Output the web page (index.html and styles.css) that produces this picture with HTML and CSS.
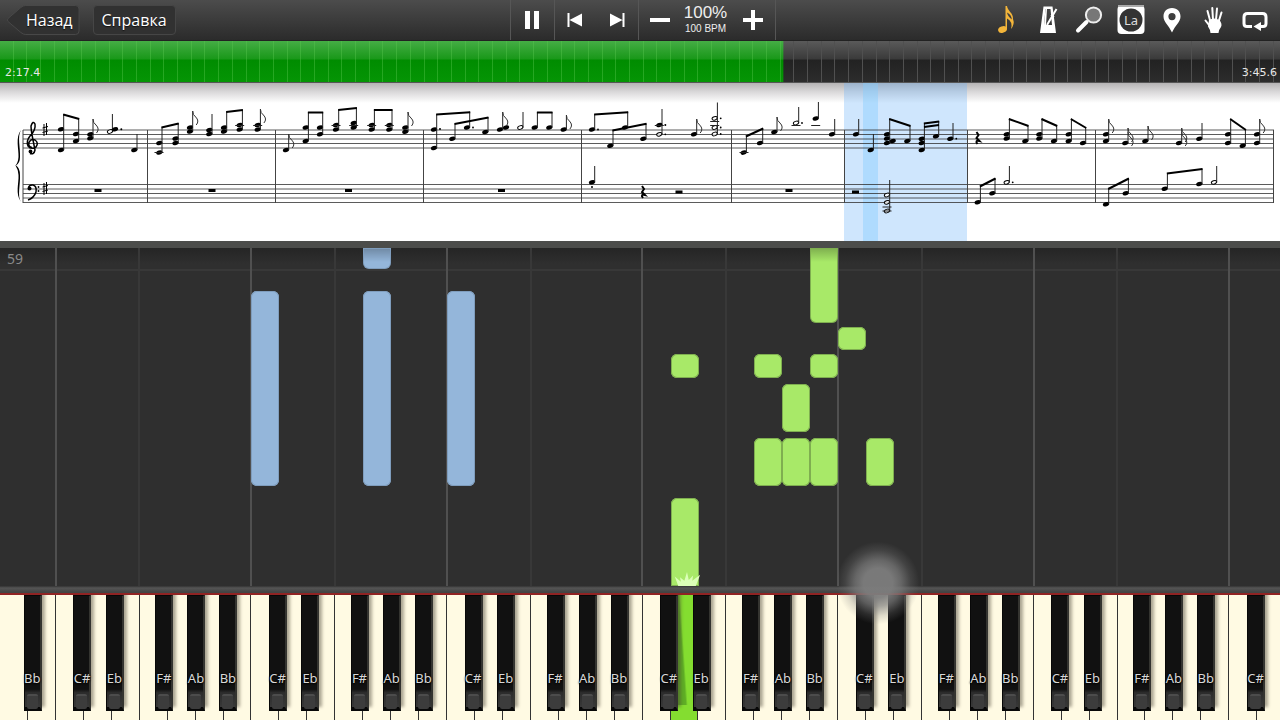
FILE: index.html
```html
<!DOCTYPE html>
<html lang="ru">
<head>
<meta charset="utf-8">
<meta name="viewport" content="width=device-width, initial-scale=1">
<title>Piano</title>
<link rel="stylesheet" href="styles.css">
</head>
<body>
<header class="toolbar">
  <nav class="toolbar-left">
    <button class="nav-btn nav-back" type="button">
      <svg class="back-shape" viewBox="0 0 73 30" preserveAspectRatio="none" aria-hidden="true"><path d="M14 2.500Q16 .5 19 .5H69Q72.500 .5 72.500 4V26Q72.500 29.500 69 29.500H19Q16 29.500 14 27.500L1 16.500Q0 15 1 13.500Z"/></svg>
      <span class="nav-text">Назад</span>
    </button>
    <button class="nav-btn nav-help" type="button">Справка</button>
  </nav>
  <div class="transport">
    <button class="tbtn pause" type="button" aria-label="Pause"><svg width="16" height="18" viewBox="0 0 16 18"><path d="M1 0h5v18H1zM10 0h5v18h-5z"/></svg></button>
    <div class="skip">
      <button class="tbtn" type="button" aria-label="Previous"><svg width="16" height="14" viewBox="0 0 16 14"><path d="M.5 0H2.500V14H.5zM2.500 7L15 .5V13.500z"/></svg></button>
      <button class="tbtn" type="button" aria-label="Next"><svg width="16" height="14" viewBox="0 0 16 14"><path d="M13.500 0h2V14h-2zM13.500 7L1 .5V13.500z"/></svg></button>
    </div>
    <div class="tempo">
      <button class="tbtn" type="button" aria-label="Slower"><svg width="20" height="20" viewBox="0 0 20 20"><path d="M0 8h20v4H0z"/></svg></button>
      <div class="tempo-value"><span class="percent">100%</span><span class="bpm">100 BPM</span></div>
      <button class="tbtn" type="button" aria-label="Faster"><svg width="20" height="20" viewBox="0 0 20 20"><path d="M0 8h8V0h4v8h8v4h-8v8H8v-8H0z"/></svg></button>
    </div>
  </div>
  <div class="tools">
    <button class="tool" type="button" aria-label="Notes"><svg width="28" height="30" viewBox="0 0 28 30"><g class="gold"><ellipse cx="10.500" cy="24.500" rx="4.500" ry="3.200" transform="rotate(-20 10.500 24.500)"/><path d="M13.500 1H15C15.500 6 21.500 8 21 14Q23 19 19 24Q21 16.500 15 13.500V24.500H13.500zM15 7.500Q15.500 11 19.800 14.500Q19.500 9.500 15 7.500z"/></g></svg></button>
    <button class="tool" type="button" aria-label="Metronome"><svg width="28" height="30" viewBox="0 0 28 30"><path fill-rule="evenodd" d="M9.500 1.500H18.500L22 28H6zM11.500 4L10 20H18L16.500 4z"/><path class="line" d="M13 20L22.500 4M17 10L20 12"/><path d="M11.500 4h1.500l-1 16h-2z"/></svg></button>
    <button class="tool" type="button" aria-label="Zoom"><svg width="28" height="30" viewBox="0 0 28 30"><path class="handle" d="M3 25.500L11.500 17"/><circle class="lens" cx="18.500" cy="10" r="7.600"/></svg></button>
    <button class="tool" type="button" aria-label="Labels"><svg width="28" height="30" viewBox="0 0 28 30"><rect x=".5" y=".5" width="27" height="28.500" rx="4"/><path class="pale" d="M1 0H27V2H1z"/><circle class="disc" cx="14" cy="15" r="11.500"/><text class="la" x="14" y="20" text-anchor="middle">La</text></svg></button>
    <button class="tool" type="button" aria-label="Bookmark"><svg width="28" height="30" viewBox="0 0 28 30"><path fill-rule="evenodd" d="M14 3C8.500 3 5.500 7 5.500 11.500C5.500 17 10.500 20 14 27.500C17.500 20 22.500 17 22.500 11.500C22.500 7 19.500 3 14 3zM14 8a3.600 3.600 0 1 1 0 7.200a3.600 3.600 0 1 1 0-7.200z"/></svg></button>
    <button class="tool" type="button" aria-label="Hands"><svg width="28" height="30" viewBox="0 0 28 30"><path class="fingers" d="M10.500 17L7.500 6M13 15L12.300 3M16 15L17 3.500M18.500 17L21.500 7.500M10.500 22L5.500 15.500"/><path d="M9 15Q14 12 19.500 15Q22.500 19 21 22Q18.500 25 18.500 28H10.500Q10.500 25 8 21.500Z"/></svg></button>
    <button class="tool" type="button" aria-label="Loop"><svg width="28" height="30" viewBox="0 0 28 30"><path class="loop" d="M11 21.500H6Q3 21.500 3 18.500V12Q3 8.500 6.500 8.500H21.500Q25 8.500 25 12V18.500Q25 21.500 22 21.500H19"/><path d="M12.500 21.500l7.500-4.500v9z"/></svg></button>
  </div>
</header>
<div class="timeline" role="progressbar" aria-valuemin="0" aria-valuemax="100" aria-valuenow="61" aria-label="Position">
  <div class="timeline-fill"></div>
  <div class="timeline-text"><span>2:17.4</span><span>3:45.6</span></div>
</div>
<section class="score">
  <svg class="sheet" id="sheet" viewBox="0 83 1280 158" role="img" aria-label="Sheet music">
    <rect class="bar-now" x="844" y="83" width="123" height="158"/>
    <rect class="beat-now" x="863" y="83" width="15" height="158"/>
    <g id="staves"></g>
    <path class="brace" d="M21 130C15 137 19 150 18.500 157Q18 163 15.500 165.500Q18 169 18.500 175C19 183 15 194 21 202C17 196 20.500 184 20 175Q20 168 16 165.500Q20 163 20 157C20.500 147 17 137 21 130Z"/>
    <path class="clef" d="M32 147.500Q28 147 29 142.500Q31 138.500 35 140Q39 143 36 147Q31 150 28 146Q26 141 30 136Q36 130 35 124Q33 120 31 126Q31 130 33 140L35 150Q34 155 30 153.500"/>
    <circle cx="30.500" cy="151.500" r="1.900"/>
    <path class="clef" d="M28.500 188Q29 184.500 33 185Q37 186 36 192Q34 198 28 200"/>
    <circle cx="29.500" cy="188.500" r="2"/><circle cx="38.500" cy="187" r=".9"/><circle cx="38.500" cy="191" r=".9"/>
    <path class="sharp" d="M44 124V136M46.500 123V135M42.500 128L48 126.500M42.500 132.500L48 131M44 183V195M46.500 182V194M42.500 187L48 185.500M42.500 191.500L48 190"/>
    <g id="notation"></g>
  </svg>
</section>
<main class="roll" id="roll">
  <span class="bar-number">59</span>
</main>
<div class="rail"></div>
<section class="piano" id="piano" aria-label="Keyboard"></section>
<script src="app.js"></script>
</body>
</html>
```
FILE: styles.css
```css
* { box-sizing: border-box; }

body {
  margin: 0;
  min-height: 100vh;
  display: flex;
  flex-direction: column;
  overflow-x: hidden;
  background: #2f2f2f;
  font-family: "Noto Sans", "Open Sans", sans-serif;
  color: #fff;
}

button {
  margin: 0;
  padding: 0;
  border: 0;
  background: none;
  color: inherit;
  font: inherit;
  cursor: pointer;
}

/* Toolbar */
.toolbar {
  display: grid;
  grid-template-columns: 1fr 266px 1fr;
  height: 40px;
  padding-left: 5px;
  background: linear-gradient(#4c4c4c, #2b2b2b);
}
.toolbar-left {
  display: flex;
  align-items: center;
  gap: 13px;
  padding-left: 2px;
}
.nav-btn {
  height: 30px;
  font-family: "Open Sans", sans-serif;
  font-size: 16px;
  font-weight: 500;
  line-height: 28px;
  text-shadow: 0 1px 1px #111;
}
.nav-back {
  position: relative;
  padding: 0 7px 0 19px;
}
.back-shape {
  position: absolute;
  inset: 0;
  width: 100%;
  height: 100%;
  stroke: #484848;
}
.nav-text { position: relative; }
.nav-help {
  padding: 0 8px;
  background: #313131;
  border: 1px solid #464646;
  border-radius: 4px;
}

.transport {
  display: grid;
  grid-template-columns: 43px 85px 1fr;
  border-left: 1px solid #565656;
  border-right: 1px solid #565656;
}
.tbtn {
  display: flex;
  align-items: center;
  justify-content: center;
}
.toolbar svg { fill: #fff; }
.skip {
  display: grid;
  grid-template-columns: 1fr 1fr;
  border-left: 1px solid #565656;
  border-right: 1px solid #565656;
}
.tempo {
  display: grid;
  grid-template-columns: 42px 50px 1fr;
}
.tempo-value {
  display: flex;
  flex-direction: column;
  align-items: center;
  gap: 1px;
  padding-top: 4px;
  font-family: "Liberation Sans", sans-serif;
  color: #eee;
}
.percent { font-size: 17px; line-height: 18px; }
.bpm { font-size: 10px; line-height: 12px; white-space: nowrap; }

.tools {
  display: flex;
  justify-content: flex-end;
  padding-right: 4px;
}
.tool {
  display: flex;
  align-items: center;
  justify-content: center;
  flex: 0 1 auto;
  width: 3.240vw;
}
.toolbar .gold { fill: #f3b53a; }
.toolbar .back-shape { fill: #313131; }
.line { stroke: #fff; stroke-width: 2; fill: none; }
.handle { stroke: #fff; stroke-width: 4; stroke-linecap: round; }
.lens { fill: #777; stroke: #eee; stroke-width: 2; }
.pale { fill: #aaa; }
.disc { fill: #333; }
.la { font-size: 13px; fill: #ddd; }
.fingers { fill: none; stroke: #fff; stroke-width: 2; stroke-linecap: round; }
.loop { fill: none; stroke: #fff; stroke-width: 3; }

/* Song position */
.timeline {
  position: relative;
  height: 43px;
  border-top: 1px solid #222;
  border-bottom: 1px solid #555;
  background:
    repeating-linear-gradient(90deg, transparent 0 calc(1.07% - 1px), #505050 calc(1.07% - 1px) 1.07%),
    linear-gradient(#5a5a5a 0, #3a3a3a 18px, #222 19px, #2c2c2c 41px);
}
.timeline-fill {
  position: absolute;
  inset: 0;
  background:
    repeating-linear-gradient(90deg, transparent 0 calc(1.07% - 1px), rgba(90, 200, 80, .4) calc(1.07% - 1px) 1.07%),
    linear-gradient(#45ad45 0, #199819 18px, #008c00 19px, #059505 41px);
  clip-path: inset(0 38.8% 0 0);
}
.timeline-text {
  position: relative;
  display: flex;
  justify-content: space-between;
  padding: 25px 3px 0 5px;
  font-family: "DejaVu Sans", sans-serif;
  font-size: 11px;
  line-height: 14px;
  color: #e8e8e8;
}

/* Sheet music */
.score {
  background: linear-gradient(#b5b3b4 0, #dad9da 9px, #fff 20px);
}
.sheet { display: block; width: 100%; height: auto; }
.bar-now { fill: #6cb4f8; opacity: .33; }
.beat-now { fill: #82ccff; opacity: .42; }
.staff-line { stroke: #333; stroke-width: 1; opacity: .8; }
.bar-line { stroke: #444; stroke-width: 1; }
.stem { stroke: #222; stroke-width: 1; }
.beam { stroke: #000; stroke-width: 2; }
.ledger { stroke: #222; stroke-width: 1; }
.half { fill: #fff; fill-opacity: .8; stroke: #000; stroke-width: 1; }
.flag { fill: none; stroke: #333; stroke-width: 1; }
.clef { fill: none; stroke: #000; stroke-width: 1.500; }
.sharp { stroke: #000; stroke-width: 1; }
.quarter-rest { fill: none; stroke: #000; stroke-width: 2; }

/* Falling notes */
.roll {
  position: relative;
  flex: 1 0 345px;
  background: linear-gradient(#252525, #2f2f2f 16px);
  border-top: 7px solid #4c4d4b;
}
.roll::before {
  content: "";
  position: absolute;
  inset: 21px 0 0;
  border-top: 2px solid #383838;
}
.bar-number {
  position: relative;
  display: block;
  padding-left: 7px;
  font-size: 14px;
  line-height: 22px;
  color: #8a8a8a;
}
.guide {
  position: absolute;
  top: 0;
  bottom: 0;
  width: 2px;
  background: #383838;
}
.guide.octave { background: #505050; }
.note {
  position: absolute;
  width: 2.183%;
  border-radius: 6px;
  background: #a8e968;
  box-shadow: inset 0 0 0 1px #7fae50;
}
.note.left { background: #94b6da; box-shadow: inset 0 0 0 1px #7f9dbd; }
.note.entering {
  border-top-left-radius: 0;
  border-top-right-radius: 0;
  background-image: linear-gradient(rgba(0, 0, 0, .25), transparent 14px);
}
.note.playing { border-bottom-left-radius: 0; border-bottom-right-radius: 0; }
.spark {
  position: absolute;
  left: 52.400%;
  bottom: 0;
  width: 32px;
  height: 14px;
  fill: #dcffb8;
}
.glow {
  position: absolute;
  z-index: 3;
  left: 65.200%;
  bottom: -40px;
  width: 86px;
  height: 86px;
  background: radial-gradient(circle, rgba(125, 125, 125, .95) 0 24%, rgba(125, 125, 125, .7) 38%, rgba(125, 125, 125, .25) 54%, transparent 68%);
  pointer-events: none;
}
.rail {
  height: 9px;
  background: linear-gradient(#333, #555 2px, #444 6px);
  border-bottom: 2px solid #902323;
}

/* Keyboard */
.piano {
  position: relative;
  display: flex;
  height: 125px;
  overflow: hidden;
}
.white {
  flex: 0 0 2.183%;
  background: #fffae3;
  border-right: 1px solid #333;
}
.white.down { background: linear-gradient(86deg, #5fae25 44%, #84dd30 50%) 0 0 / 100% 110px no-repeat #84dd30; }
.black {
  position: absolute;
  top: 0;
  width: 18px;
  height: 116px;
  border: 1px solid #080808;
  border-right: 2px solid #343430;
  border-bottom: 4px solid #080808;
  background: linear-gradient(#111 0 84%, #2c2c2c 87%, #383838);
  box-shadow: 3px -4px 3px rgba(70, 65, 50, .45);
  display: flex;
  flex-direction: column;
  align-items: center;
  padding-top: 74px;
  font-size: 13px;
  line-height: 16px;
  color: #d8d8d8;
  text-shadow: 0 1px 2px #000, 0 0 2px #000;
}
.black::after {
  content: "";
  flex: none;
  width: 11px;
  height: 13px;
  margin-top: 8px;
  border-top: 2px solid #4c4c4c;
  border-radius: 2px;
  background: #3c3c3c;
}
```
FILE: app.js
```js
const NS = "http://www.w3.org/2000/svg";
const notation = document.getElementById("notation");
const staves = document.getElementById("staves");

function draw(parent, tag, cls, attrs) {
  const el = document.createElementNS(NS, tag);
  if (cls) el.setAttribute("class", cls);
  for (const key in attrs) el.setAttribute(key, attrs[key]);
  parent.appendChild(el);
  return el;
}
function line(parent, cls, x1, y1, x2, y2) {
  draw(parent, "line", cls, { x1, y1, x2, y2 });
}

[130, 134.5, 139, 143.5, 148, 184.5, 189, 193.5, 198, 202.5].forEach(y =>
  line(staves, "staff-line", 23, y, 1274, y));
[23, 147.5, 275.5, 423.5, 581.5, 731.5, 844.5, 967.5, 1095.5, 1273.5].forEach(x =>
  line(staves, "bar-line", x, 130, x, 203));

function head(x, y, open) {
  draw(notation, "ellipse", open ? "half" : "", {
    cx: x, cy: y, rx: open ? 2.7 : 3.2, ry: open ? 1.7 : 2.1,
    transform: `rotate(-18 ${x} ${y})`
  });
}

/* chord: head x, head heights, stem top, options (f: flags, h: open heads, d: dotted) */
function chord(x, ys, top, opt = {}) {
  ys.forEach(y => {
    head(x, y, opt.h);
    if (opt.d) draw(notation, "circle", "", { cx: x + 6, cy: y, r: 0.9 });
  });
  const sx = x + 2.7;
  line(notation, "stem", sx, top, sx, Math.max(...ys));
  for (let i = 0; i < (opt.f || 0); i++) {
    const t = top + i * 4;
    draw(notation, "path", "flag", { d: `M${sx} ${t}Q${sx} ${t + 4} ${sx + 3} ${t + 6}Q${sx + 7} ${t + 10} ${sx + 3.5} ${t + 14}` });
  }
}
function beam(a, b) {
  chord(...a);
  chord(...b);
  line(notation, "beam", a[0] + 2.2, a[2] + 0.5, b[0] + 3.2, b[2] + 0.5);
}

beam([61, [129.3, 150], 114], [76, [134, 141], 118.5]);
chord(90.3, [134.3, 138.3], 119, { f: 1 });
line(notation, "stem", 112.4, 114, 112.4, 130);
head(115, 129.3); head(110, 131.5, true);
draw(notation, "circle", "", { cx: 121.3, cy: 129.3, r: 1 });
chord(134.3, [150], 134);
beam([159.3, [143, 152.5], 127], [175.5, [138.5, 143], 123]);
chord(190, [127.5, 131.5], 111, { f: 1 });
chord(209.3, [130, 134], 114);
beam([224, [127.5, 131.5], 111.5], [239.7, [125, 129.5], 109.5]);
chord(257.7, [125, 129.5], 109, { f: 1 });

chord(286, [150], 134, { f: 1 });
beam([305.7, [127.5, 141], 112], [320, [127.5, 134.3], 112]);
beam([336, [125, 129.5], 109.5], [353.7, [123, 127.5], 107.5]);
beam([371.7, [125, 129.5], 109.5], [389.3, [125, 129.5], 109.5]);
chord(405.3, [127.5, 131.7], 112, { f: 1 });

beam([434, [129.5, 148], 114], [467, [127.5], 111.7, { d: 1 }]);
draw(notation, "circle", "", { cx: 440, cy: 129, r: 1 });
beam([452.3, [138.7], 123.5], [485.3, [132], 117]);
head(506, 127.5);
chord(500, [129.5], 112, { f: 1 });
chord(520.3, [127.5], 112, { h: 1 });
beam([534.7, [127.5], 112], [549.3, [127.5], 112]);
chord(563.7, [129.5], 115, { f: 1 });

beam([592, [129.5], 114, { d: 1 }], [625, [127.5], 111.7]);
beam([610.3, [145.7], 130], [643.3, [138.7], 123.3]);
chord(659.3, [134.3], 109, { h: 1, d: 1 });
head(659.3, 125);
draw(notation, "circle", "", { cx: 665.3, cy: 125, r: 1 });
chord(694, [134.3], 119, { f: 1 });
chord(714.7, [118.3, 127.5, 134], 102.5, { h: 1, d: 1 });

beam([743.7, [152.6], 136], [760, [143], 128]);
chord(774.3, [132], 117, { f: 1 });
chord(796, [123], 107, { h: 1, d: 1 });
chord(815.7, [118.5], 102);
chord(832, [134.3], 119);

chord(856, [134.3], 119);
chord(870.7, [150], 134);
head(892.7, 141);
beam([887, [134.3, 138.5, 143], 118.5], [907.3, [141], 125.5]);
beam([921.7, [138.7, 143, 150], 123], [936, [136.3], 121]);
line(notation, "beam", 924, 127, 939, 125);
chord(950.3, [138.7], 123, { d: 1 });

beam([1006.7, [134.3, 138.5], 118.5], [1025.3, [141], 125.5]);
beam([1039.3, [134.3, 138.5], 118.5], [1054, [141], 125.5]);
beam([1068.7, [134.3, 141], 118.5], [1083, [143], 127.5]);
chord(1106, [134.3, 141], 119, { f: 1 });
chord(1125.3, [143], 128, { f: 2 });
chord(1145.3, [141], 126, { f: 1 });
chord(1179, [143], 128, { f: 2 });
chord(1199.3, [138.7], 123);
beam([1228, [134.3, 143], 118.5], [1242.7, [145.7], 129.5]);
chord(1257, [134.3, 143], 119, { f: 1 });

chord(592, [182.3], 166);
draw(notation, "circle", "", { cx: 592, cy: 187, r: 1 });
chord(887, [195, 202.3, 211], 180, { h: 1 });
beam([977.7, [202.3], 186], [992.3, [193.3], 178]);
chord(1006.7, [182.3], 166, { h: 1, d: 1 });
beam([1106, [204.3], 188.5], [1125.7, [193.3], 178]);
beam([1164.7, [188.7], 173], [1199.3, [184], 168.5]);
chord(1214, [182.3], 166, { h: 1 });

[[159, 152.5], [744, 152.5], [239.7, 125.5], [257.7, 125.5], [336, 125.5], [353.7, 125.5],
 [371.7, 125.5], [389.3, 125.5], [659.3, 125.5], [714.7, 125.5], [714.7, 121.5],
 [796, 125.5], [815.7, 125.5], [887, 207], [887, 211]]
  .forEach(([x, y]) => line(notation, "ledger", x - 4.5, y, x + 4.5, y));

[[98, 189], [212, 189], [348.5, 189], [501.5, 189], [789, 189], [679, 190.5], [855.5, 190.5]]
  .forEach(([x, y]) => draw(notation, "rect", "", { x: x - 3.5, y, width: 7, height: 3 }));
[[643, 192], [977.5, 138]].forEach(([x, y]) =>
  draw(notation, "path", "quarter-rest", { d: `M${x - 1} ${y - 6}L${x + 1} ${y - 3}L${x - 1} ${y}L${x + 2} ${y + 3}Q${x - 3} ${y + 2} ${x} ${y + 6}` }));

/* Falling notes: [white key index, top, height, kind] */
const KEY = 2.183;
const roll = document.getElementById("roll");
function place(cls, left) {
  const el = document.createElement("div");
  el.className = cls;
  el.style.left = left + "%";
  roll.appendChild(el);
  return el;
}
for (let c = 2; c < 46; c += 7) {
  place("guide octave", c * KEY - 0.1);
  place("guide", (c + 3) * KEY - 0.1);
}
[
  [13, 0, 21, "left entering"], [9, 43, 195, "left"], [13, 43, 195, "left"], [16, 43, 195, "left"],
  [29, 0, 75, "entering"], [30, 79, 23, ""], [24, 106, 24, ""], [27, 106, 24, ""], [29, 106, 24, ""],
  [28, 136, 48, ""], [27, 190, 48, ""], [28, 190, 48, ""], [29, 190, 48, ""], [31, 190, 48, ""],
  [24, 250, 88, "playing"]
].forEach(([key, top, height, kind]) => {
  const el = place("note " + kind, key * KEY);
  el.style.top = top + "px";
  el.style.height = height + "px";
});
roll.insertAdjacentHTML("beforeend",
  '<svg class="spark" viewBox="0 0 32 16"><path d="M2 5L9 11L8 6L13 10L16 0L18 9L23 4L22 10L31 3L26 16H6Z"/></svg><div class="glow"></div>');

/* Keyboard */
const piano = document.getElementById("piano");
for (let i = 0; i < 46; i++) {
  const key = document.createElement("div");
  key.className = i === 24 ? "white down" : "white";
  piano.appendChild(key);
}
const sharps = [["C#", 0.63], ["Eb", 1.79], ["F#", 3.56], ["Ab", 4.71], ["Bb", 5.85]];
for (let c = -5; c < 46; c += 7) {
  sharps.forEach(([name, offset]) => {
    const pos = (c + offset) * KEY;
    if (pos < 0 || pos > 99) return;
    const key = document.createElement("div");
    key.className = "black";
    key.textContent = name;
    key.style.left = pos + "%";
    piano.appendChild(key);
  });
}
```
